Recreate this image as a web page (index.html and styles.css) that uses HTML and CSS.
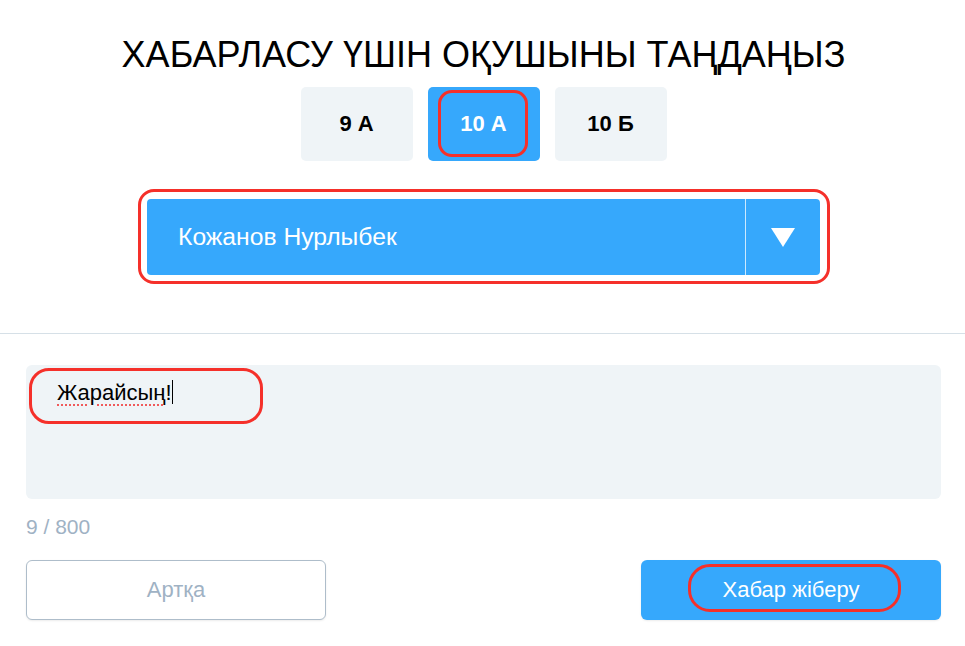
FILE: index.html
```html
<!DOCTYPE html>
<html lang="kk">
<head>
<meta charset="utf-8">
<title>Хабарласу</title>
<link rel="stylesheet" href="styles.css">
</head>
<body>
<div class="page">
  <section class="picker">
    <h1 class="title">ХАБАРЛАСУ ҮШІН ОҚУШЫНЫ ТАҢДАҢЫЗ</h1>
    <div class="classes">
      <button class="class-btn">9 А</button>
      <button class="class-btn active">10 А<span class="mark mark-class"></span></button>
      <button class="class-btn">10 Б</button>
    </div>
    <div class="select">
      <span class="select-label">Кожанов Нурлыбек</span>
      <span class="select-arrow">
        <svg width="24" height="19" viewBox="0 0 24 19"><path d="M0 0H24L12 19Z" fill="#fff"/></svg>
      </span>
      <span class="mark mark-select"></span>
    </div>
  </section>
  <hr class="divider">
  <section class="compose">
    <div class="message">
      <span class="msg-text"><span class="misspelled">Жарайсың</span>!<span class="caret"></span></span>
      <span class="mark mark-msg"></span>
    </div>
    <div class="counter">9 / 800</div>
    <div class="actions">
      <button class="btn btn-back">Артқа</button>
      <button class="btn btn-send">Хабар жіберу<span class="mark mark-send"></span></button>
    </div>
  </section>
</div>
</body>
</html>
```

FILE: styles.css
```css
* { box-sizing: border-box; }
html, body { margin: 0; padding: 0; background: #fff; }
body {
  font-family: "Liberation Sans", Arial, Helvetica, sans-serif;
  color: #000;
  width: 965px;
  height: 646px;
  overflow: hidden;
}
.page { display: flex; flex-direction: column; }

.picker { display: flex; flex-direction: column; align-items: center; padding-top: 33px; padding-left: 2px; }
.title {
  margin: 0;
  font-size: 36px;
  line-height: 44px;
  font-weight: 400;
}
.classes { display: flex; gap: 15px; margin-top: 10px; }
.class-btn {
  position: relative;
  width: 112px;
  height: 74px;
  border: 0;
  border-radius: 5px;
  background: #eff4f7;
  font-family: inherit;
  font-size: 22px;
  font-weight: 700;
  color: #000;
  padding: 0;
}
.class-btn.active { background: #36a8fc; color: #fff; }

.select {
  position: relative;
  margin-top: 38px;
  width: 673px;
  height: 76px;
  background: #36a8fc;
  border-radius: 4px;
  display: flex;
  align-items: center;
  color: #fff;
}
.select-label { flex: 1; padding-left: 31px; font-size: 24.7px; }
.select-arrow {
  width: 75px;
  height: 100%;
  border-left: 1px solid rgba(255,255,255,0.75);
  display: flex;
  align-items: center;
  justify-content: center;
}

.divider {
  margin: 58px 0 0;
  border: 0;
  height: 1px;
  background: #d6e0e7;
}

.compose { padding: 31px 24px 0 26px; display: flex; flex-direction: column; }
.message {
  position: relative;
  height: 134px;
  background: #eff4f7;
  border-radius: 6px;
  padding: 15px 0 0 31px;
  font-size: 22px;
  line-height: 26px;
}
.misspelled {
  text-decoration: underline dotted #f05a5a;
  text-decoration-thickness: 2px;
  text-underline-offset: 4px;
}
.caret {
  display: inline-block;
  width: 1px;
  height: 24px;
  background: #000;
  vertical-align: -4px;
}
.counter {
  margin-top: 16px;
  font-size: 21px;
  line-height: 24px;
  color: #9fb2c4;
}
.actions {
  display: flex;
  justify-content: space-between;
  margin-top: 21px;
}
.btn {
  position: relative;
  width: 300px;
  height: 60px;
  border-radius: 6px;
  font-family: inherit;
  font-size: 22px;
  padding: 0;
}
.btn-back {
  background: #fff;
  border: 1px solid #aebdca;
  color: #9fb2c4;
  box-shadow: 0 1px 2px rgba(0,0,0,0.08);
}
.btn-send {
  background: #36a8fc;
  border: 0;
  color: #fff;
  box-shadow: 0 1px 2px rgba(0,0,0,0.08);
}

.mark {
  position: absolute;
  border: 3px solid #f5302a;
  pointer-events: none;
}
.mark-class { top: 3px; bottom: 4px; left: 10px; right: 12px; border-radius: 14px; }
.mark-select { top: -10px; bottom: -9px; left: -9px; right: -10px; border-radius: 16px; }
.mark-msg { top: 3px; left: 3px; width: 234px; height: 56px; border-radius: 20px; }
.mark-send { top: 4px; bottom: 8px; left: 47px; right: 40px; border-radius: 22px; }
```
